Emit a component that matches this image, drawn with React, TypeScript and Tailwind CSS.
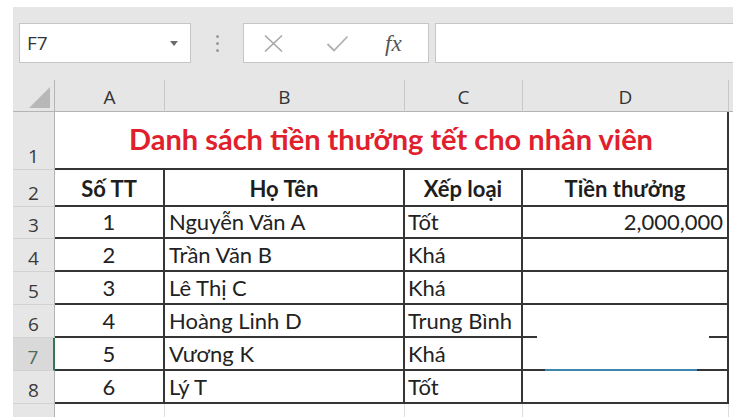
import React from "react";

const rows = [
  { n: 3, stt: "1", name: "Nguyễn Văn A", rank: "Tốt", bonus: "2,000,000" },
  { n: 4, stt: "2", name: "Trần Văn B", rank: "Khá", bonus: "" },
  { n: 5, stt: "3", name: "Lê Thị C", rank: "Khá", bonus: "" },
  { n: 6, stt: "4", name: "Hoàng Linh D", rank: "Trung Bình", bonus: "" },
  { n: 7, stt: "5", name: "Vương K", rank: "Khá", bonus: "" },
  { n: 8, stt: "6", name: "Lý T", rank: "Tốt", bonus: "" },
];

const rowHeights: Record<number, string> = {
  3: "h-[32px]",
  4: "h-[33px]",
  5: "h-[33px]",
  6: "h-[33px]",
  7: "h-[33px]",
  8: "h-[33px]",
};

function RowHead({ label, h, active }: { label: string; h: string; active?: boolean }) {
  return (
    <div
      className={`${h} flex items-end justify-center pb-[3px] border-b border-[#d2d2d2] font-['Open_Sans',sans-serif] text-[19px] leading-none ${
        active
          ? "bg-[#d9d9d9] text-[#4d6b58] border-r-2 border-r-[#2f7a4f]"
          : "bg-[#e6e6e6] text-[#3a3a3a] border-r border-r-[#b4b4b4]"
      }`}
    >
      {label}
    </div>
  );
}

export default function App() {
  return (
    <div className="w-[750px] h-[417px] overflow-hidden bg-white pl-[13px] pt-[7px]">
      <div className="w-[720px]">
        {/* formula bar */}
        <div className="flex h-[73px] items-start bg-[#e6e6e6] pt-[16px] pl-[6px]">
          <div className="flex h-[40px] w-[172px] items-center justify-between border border-[#c6c6c6] bg-white pl-[7px] pr-[12px] font-['Open_Sans',sans-serif] text-[19px] text-[#333]">
            <span>F7</span>
            <svg width="8" height="5" viewBox="0 0 8 5">
              <path d="M0 0 L8 0 L4 5 Z" fill="#6b6b6b" />
            </svg>
          </div>
          <div className="flex h-[40px] w-[52px] flex-col items-center justify-center gap-[4px]">
            <span className="h-[3px] w-[3px] rounded-full bg-[#9a9a9a]" />
            <span className="h-[3px] w-[3px] rounded-full bg-[#9a9a9a]" />
            <span className="h-[3px] w-[3px] rounded-full bg-[#9a9a9a]" />
          </div>
          <div className="flex h-[40px] w-[186px] items-center border border-[#c6c6c6] bg-white pl-[19px]">
            <svg width="21" height="19" viewBox="0 0 21 19">
              <path d="M2 1.5 L19 17.5 M19 1.5 L2 17.5" stroke="#a6a6a6" strokeWidth="1.6" fill="none" />
            </svg>
            <svg className="ml-[42px]" width="23" height="17" viewBox="0 0 23 17">
              <path d="M1.5 9 L8 15.5 L21.5 1.5" stroke="#b0b0b0" strokeWidth="1.8" fill="none" />
            </svg>
            <span className="ml-[36px] font-['Liberation_Serif',serif] text-[23px] italic leading-none text-[#555]">
              fx
            </span>
          </div>
          <div className="ml-[6px] h-[40px] flex-1 border-y border-l border-[#c6c6c6] bg-white" />
        </div>

        {/* sheet */}
        <div className="grid grid-cols-[42px_110px_240px_118px_206px_4px]">
          {/* column headers */}
          <div className="flex h-[32px] items-end justify-end border-r border-b border-[#b4b4b4] bg-[#e6e6e6] pr-[4px] pb-[3px]">
            <svg width="21" height="21" viewBox="0 0 21 21">
              <path d="M21 0 L21 21 L0 21 Z" fill="#b8b8b8" />
            </svg>
          </div>
          {["A", "B", "C", "D"].map((c) => (
            <div
              key={c}
              className="flex h-[32px] items-center justify-center border-r border-b border-r-[#c8c8c8] border-b-[#b4b4b4] bg-[#e6e6e6] pt-[3px] font-['Open_Sans',sans-serif] text-[19px] text-[#333]"
            >
              {c}
            </div>
          ))}
          <div className="h-[32px] border-b border-[#b4b4b4] bg-[#e6e6e6]" />

          {/* row 1: title */}
          <RowHead label="1" h="h-[58px]" />
          <div className="col-span-4 flex h-[58px] items-center justify-center border-r-2 border-b-2 border-[#353535] pb-[2px] font-['Lato',sans-serif] text-[29px] font-bold text-[#e0202c]">
            Danh sách tiền thưởng tết cho nhân viên
          </div>
          <div className="h-[58px] bg-white" />

          {/* row 2: headers */}
          <RowHead label="2" h="h-[37px]" />
          {["Số TT", "Họ Tên", "Xếp loại", "Tiền thưởng"].map((t) => (
            <div
              key={t}
              className="flex h-[37px] items-center justify-center border-r-2 border-b-2 border-[#353535] pt-[2px] font-['Lato',sans-serif] text-[22px] font-bold text-[#1e1e1e]"
            >
              {t}
            </div>
          ))}
          <div className="h-[37px] bg-white" />

          {rows.map((r) => {
            const h = rowHeights[r.n];
            return (
              <React.Fragment key={r.n}>
                <RowHead label={String(r.n)} h={h} active={r.n === 7} />
                <div className={`${h} flex items-end justify-center border-r-2 border-b-2 border-[#353535] pb-[1px] font-['Lato',sans-serif] text-[22px] leading-[28px] text-[#222]`}>
                  {r.stt}
                </div>
                <div className={`${h} flex items-end border-r-2 border-b-2 border-[#353535] pb-[1px] pl-[4px] font-['Lato',sans-serif] text-[22px] leading-[28px] text-[#222]`}>
                  {r.name}
                </div>
                <div className={`${h} flex items-end border-r-2 border-b-2 border-[#353535] pb-[1px] pl-[3px] font-['Lato',sans-serif] text-[22px] leading-[28px] text-[#222]`}>
                  {r.rank}
                </div>
                <div className={`${h} relative flex items-end justify-end border-r-2 border-b-2 border-[#353535] pb-[1px] pr-[4px] font-['Lato',sans-serif] text-[22px] leading-[28px] text-[#222]`}>
                  {r.bonus}
                  {r.n === 6 && (
                    <span className="absolute -bottom-[2px] left-[14px] right-[18px] h-[2px] bg-white" />
                  )}
                  {r.n === 7 && (
                    <span className="absolute -bottom-[2px] left-[22px] right-[30px] h-[2px] bg-[#3d86b0]" />
                  )}
                </div>
                <div className={`${h} bg-white`} />
              </React.Fragment>
            );
          })}

          {/* partial row 9 */}
          <div className="h-[13px] border-r border-[#b4b4b4] bg-[#e6e6e6]" />
          <div className="h-[13px] border-r border-[#dedede]" />
          <div className="h-[13px] border-r border-[#dedede]" />
          <div className="h-[13px] border-r border-[#dedede]" />
          <div className="h-[13px] border-r border-[#dedede]" />
          <div className="h-[13px]" />
        </div>
      </div>
    </div>
  );
}
